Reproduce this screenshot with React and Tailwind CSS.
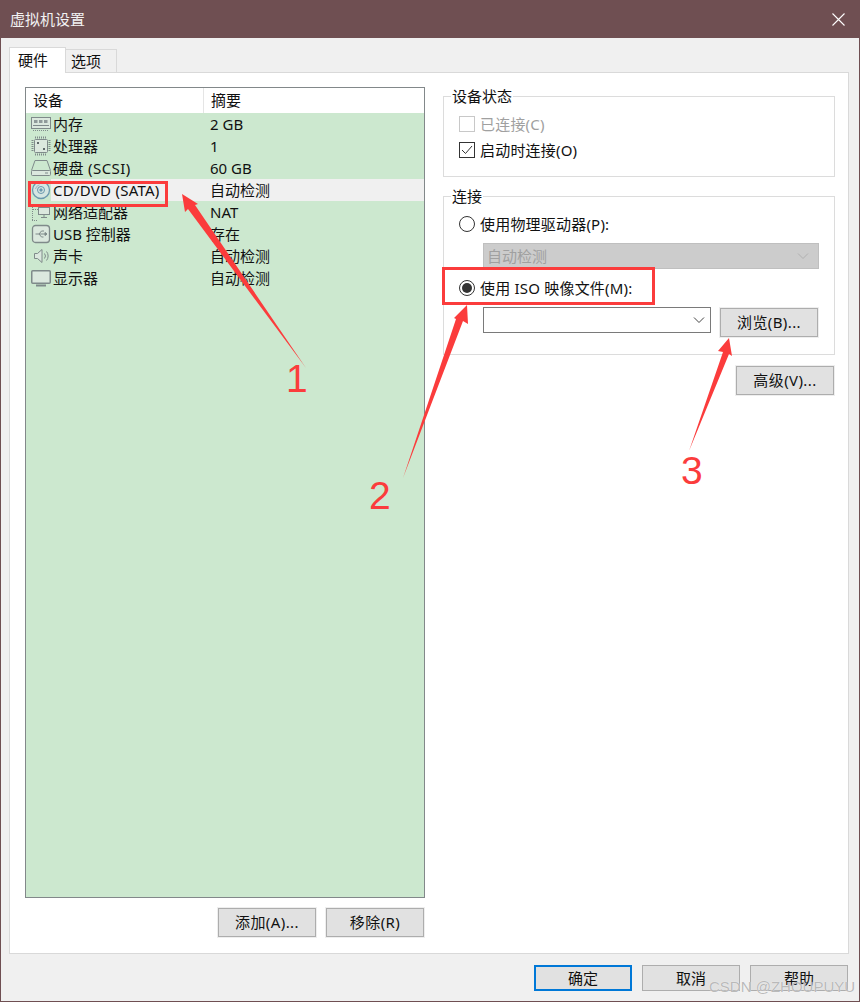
import React from 'react';

const FONT = 'font-["Noto_Sans","Noto_Sans_CJK_SC",sans-serif]';

const MemoryIcon = () => (
  <svg width="20" height="20" viewBox="0 0 20 20" fill="none" stroke="#7f8a8a">
    <rect x="0.5" y="3.5" width="19" height="11" fill="#dbe8de" />
    <rect x="3" y="6" width="3.5" height="3" fill="#8f9a9a" stroke="none" />
    <rect x="8" y="6" width="3.5" height="3" fill="#8f9a9a" stroke="none" />
    <rect x="13" y="6" width="3.5" height="3" fill="#8f9a9a" stroke="none" />
    <path d="M2 11.5h16" />
    <path d="M2 16.5h16" strokeDasharray="1 1" />
  </svg>
);

const CpuIcon = () => (
  <svg width="20" height="20" viewBox="0 0 20 20" fill="none" stroke="#7f8a8a">
    <rect x="3.5" y="3.5" width="13" height="13" rx="1" fill="#dbe8de" />
    <path d="M4 1.5h12M4 18.500h12M1.500 4v12M18.500 4v12" strokeDasharray="1 1" strokeWidth="2" />
    <rect x="6" y="6" width="2" height="2" fill="#5f6a6a" stroke="none" />
    <rect x="12" y="12" width="2" height="2" fill="#5f6a6a" stroke="none" />
  </svg>
);

const DiskIcon = () => (
  <svg width="20" height="20" viewBox="0 0 20 20" fill="none" stroke="#7f8a8a">
    <path d="M0.500 12.500L4 2.500h12l3.500 10" />
    <rect x="0.500" y="12.500" width="19" height="5" rx="1" fill="#dbe8de" />
    <path d="M14 15h3" />
  </svg>
);

const CdIcon = () => (
  <svg width="20" height="20" viewBox="0 0 20 20" fill="none" stroke="#6a98ae">
    <circle cx="10" cy="10" r="8.500" fill="#d5e6e2" strokeWidth="1.300" />
    <circle cx="10" cy="10" r="3.500" />
    <circle cx="10" cy="10" r="1.200" fill="#6a98ae" />
    <path d="M4.500 9a5.500 5.500 0 0 1 4-4.200" stroke="#9db9c6" />
  </svg>
);

const NetIcon = () => (
  <svg width="20" height="20" viewBox="0 0 20 20" fill="none" stroke="#7f8a8a">
    <rect x="7.500" y="5.500" width="11" height="7" fill="#dbe8de" />
    <path d="M13 12.500v3M10 15.500h6" />
    <path d="M1 2.500h6M1.500 3v15M1 18.500h6M2 7.500h5" strokeDasharray="1 1" />
  </svg>
);

const UsbIcon = () => (
  <svg width="20" height="20" viewBox="0 0 20 20" fill="none" stroke="#7f8a8a">
    <rect x="1.500" y="1.500" width="17" height="17" rx="3" fill="#dbe8de" strokeWidth="1.300" />
    <path d="M4.500 10h10M8 10l2.500-3h2.500M8 10l2.500 3h2" />
    <path d="M14 8.500l2 1.500-2 1.500z" fill="#7f8a8a" />
  </svg>
);

const SoundIcon = () => (
  <svg width="20" height="20" viewBox="0 0 20 20" fill="none" stroke="#7f8a8a">
    <path d="M3.500 7.500h3l4.500-4v13l-4.500-4h-3z" fill="#dbe8de" />
    <path d="M13.500 7.500a4 4 0 0 1 0 5M15.500 5.500a7 7 0 0 1 0 9" />
  </svg>
);

const DisplayIcon = () => (
  <svg width="20" height="20" viewBox="0 0 20 20" fill="none" stroke="#7f8a8a">
    <rect x="0.750" y="2.750" width="18.500" height="12.500" rx="1" fill="#dbe8de" strokeWidth="1.500" />
    <path d="M5 17.500h10" strokeWidth="2" />
  </svg>
);

const devices = [
  { icon: <MemoryIcon />, name: '内存', summary: '2 GB' },
  { icon: <CpuIcon />, name: '处理器', summary: '1' },
  { icon: <DiskIcon />, name: '硬盘 (SCSI)', summary: '60 GB', wide: 'tracking-[0.4px]' },
  { icon: <CdIcon />, name: 'CD/DVD (SATA)', summary: '自动检测', selected: true, wide: 'tracking-[0.25px]' },
  { icon: <NetIcon />, name: '网络适配器', summary: 'NAT' },
  { icon: <UsbIcon />, name: 'USB 控制器', summary: '存在' },
  { icon: <SoundIcon />, name: '声卡', summary: '自动检测' },
  { icon: <DisplayIcon />, name: '显示器', summary: '自动检测' },
];

const Button = ({ children, className = '' }) => (
  <button type="button" className={`flex h-[29px] w-[98px] items-center justify-center border border-[#adadad] bg-[#e1e1e1] text-[15px] tracking-[0.4px] text-[#111] ring-1 ring-[#eeeeee] ${className}`}>
    {children}
  </button>
);

const Chevron = ({ color = '#444' }) => (
  <svg width="12" height="8" viewBox="0 0 12 8" fill="none" stroke={color}>
    <path d="M1 1.500l5 5 5-5" />
  </svg>
);

const Radio = ({ checked, label }) => (
  <div className="flex h-4 items-center gap-[5px]">
    <span className="flex h-4 w-4 items-center justify-center rounded-full border border-[#333]">
      {checked && <span className="h-[10px] w-[10px] rounded-full bg-[#333]" />}
    </span>
    <span className="tracking-[0.2px]">{label}</span>
  </div>
);

const Group = ({ title, className = '', children }) => (
  <div className={`relative border border-[#dcdcdc] pl-[15px] ${className}`}>
    <span className="absolute left-[7px] top-[-11px] bg-white px-[1px] leading-[20px]">{title}</span>
    {children}
  </div>
);

// red marks that were drawn over the screenshot
const Annotations = () => (
  <svg className="pointer-events-none absolute left-0 top-0" width="860" height="1002" viewBox="0 0 860 1002">
    <rect x="28.500" y="181.500" width="137" height="23" fill="none" stroke="#fb3c3c" strokeWidth="3" />
    <rect x="442.500" y="267.500" width="210" height="35" fill="none" stroke="#fb3c3c" strokeWidth="3" />
    <polygon points="181,193 197,203 194,204 305,367 187,208 184,211" fill="#fb3c3c" />
    <polygon points="466,304 467,323 462,320 402,477 455,318 453,317" fill="#fb3c3c" />
    <polygon points="728,337 731,355 728,353 688,450 722,351 717,350" fill="#fb3c3c" />
    <text x="285" y="391" fill="#fb3c3c" fontSize="39" fontFamily="Liberation Sans">1</text>
    <text x="368" y="508" fill="#fb3c3c" fontSize="39" fontFamily="Liberation Sans">2</text>
    <text x="680" y="483" fill="#fb3c3c" fontSize="39" fontFamily="Liberation Sans">3</text>
  </svg>
);

export default function App() {
  return (
    <div className={`relative flex h-[1002px] w-[860px] flex-col border border-[#6f4f52] bg-[#f0f0f0] text-[15px] text-[#111] ${FONT}`}>
      <div className="flex h-[37px] shrink-0 items-center justify-between bg-[#6f4f52] pl-[9px] pr-[14px] text-[#f2f2f2]">
        <span>虚拟机设置</span>
        <svg width="13" height="13" viewBox="0 0 13 13" stroke="#fff" strokeWidth="1.100">
          <path d="M0.500 0.500l12 12M12.500 0.500l-12 12" />
        </svg>
      </div>

      <div className="flex min-h-0 flex-1 flex-col pl-2 pr-[10px] pt-[9px]">
        <div className="relative z-10 flex h-[26px] items-start">
          <div className="flex h-[26px] w-[57px] items-start border border-b-0 border-[#d9d9d9] bg-white pl-2 pt-[1px]">硬件</div>
          <div className="mt-[2px] flex h-[23px] w-[51px] items-center border border-l-0 border-b-0 border-[#d9d9d9] pl-[5px]">选项</div>
        </div>
        <div className="mt-[-1px] flex h-[882px] border border-[#d9d9d9] bg-white pl-[15px] pt-[14px]">
          <div className="flex w-[400px] flex-col">
            <div className="flex h-[811px] flex-col border border-[#82888a] bg-[#cce8cf]">
              <div className="flex h-[25px] shrink-0 items-center bg-white">
                <span className="h-full w-[178px] border-r border-[#e5e5e5] pl-[7px] leading-[25px]">设备</span>
                <span className="pl-[7px]">摘要</span>
              </div>
              {devices.map((d) => (
                <div key={d.name} className="flex h-[22px] items-center">
                  <span className="ml-[5px] flex w-[20px] shrink-0 items-center justify-center">{d.icon}</span>
                  <div className={`flex h-full flex-1 items-center pl-[2px] ${d.selected ? 'bg-[#f0f0f0]' : ''}`}>
                    <span className={`w-[157px] shrink-0 whitespace-nowrap ${d.wide || ''}`}>{d.name}</span>
                    <span className="whitespace-nowrap">{d.summary}</span>
                  </div>
                </div>
              ))}
            </div>
            <div className="mt-[10px] flex justify-end gap-[10px] pr-[1px]">
              <Button>添加(A)...</Button>
              <Button>移除(R)</Button>
            </div>
          </div>

          <div className="ml-[18px] flex w-[392px] flex-col pt-[9px]">
            <Group title="设备状态" className="h-[81px] pt-[19px]">
              <div className="flex h-4 items-center gap-[5px] text-[#a0a0a0]">
                <span className="h-4 w-4 border border-[#c8c8c8]" />
                <span className="tracking-[0.2px]">已连接(C)</span>
              </div>
              <div className="mt-[10px] flex h-4 items-center gap-[5px]">
                <span className="flex h-4 w-4 items-center justify-center border border-[#333]">
                  <svg width="12" height="10" viewBox="0 0 12 10" fill="none" stroke="#333">
                    <path d="M1 5l3.500 3.500L11 1" />
                  </svg>
                </span>
                <span className="tracking-[0.2px]">启动时连接(O)</span>
              </div>
            </Group>

            <Group title="连接" className="mt-[19px] h-[159px] pt-[19px]">
              <Radio label="使用物理驱动器(P):" />
              <div className="ml-6 mt-[11px] flex h-[26px] w-[336px] items-center justify-between border border-[#bfbfbf] bg-[#cccccc] pl-[3px] pr-[9px] text-[#a0a0a0]">
                <span>自动检测</span>
                <Chevron color="#b0b0b0" />
              </div>
              <div className="mt-[11px]">
                <Radio checked label="使用 ISO 映像文件(M):" />
              </div>
              <div className="ml-6 mt-[11px] flex items-start">
                <div className="flex h-[26px] w-[228px] items-center justify-end border border-[#7a7a7a] bg-white pr-[5px]">
                  <Chevron />
                </div>
                <Button className="ml-[9px] mt-[1px]">浏览(B)...</Button>
              </div>
            </Group>

            <Button className="mr-[1px] mt-[11px] self-end">高级(V)...</Button>
          </div>
        </div>

        <div className="mt-[11px] flex justify-end gap-[10px] pr-[1px]">
          <button type="button" className="flex h-[26px] w-[98px] items-center justify-center border-2 border-[#0078d7] bg-[#e1e1e1]">确定</button>
          <button type="button" className="flex h-[26px] w-[98px] items-center justify-center border border-[#adadad] bg-[#e1e1e1]">取消</button>
          <button type="button" className="flex h-[26px] w-[98px] items-center justify-center border border-[#adadad] bg-[#e1e1e1]">帮助</button>
        </div>
      </div>

      <Annotations />
      <span className="absolute left-[708px] top-[976px] whitespace-nowrap font-['Liberation_Sans',sans-serif] text-[15px] leading-[20px] text-[#a8a8a8]/80 [text-shadow:0_0_1px_#fff]">CSDN @ZHOUPUYU</span>
    </div>
  );
}
